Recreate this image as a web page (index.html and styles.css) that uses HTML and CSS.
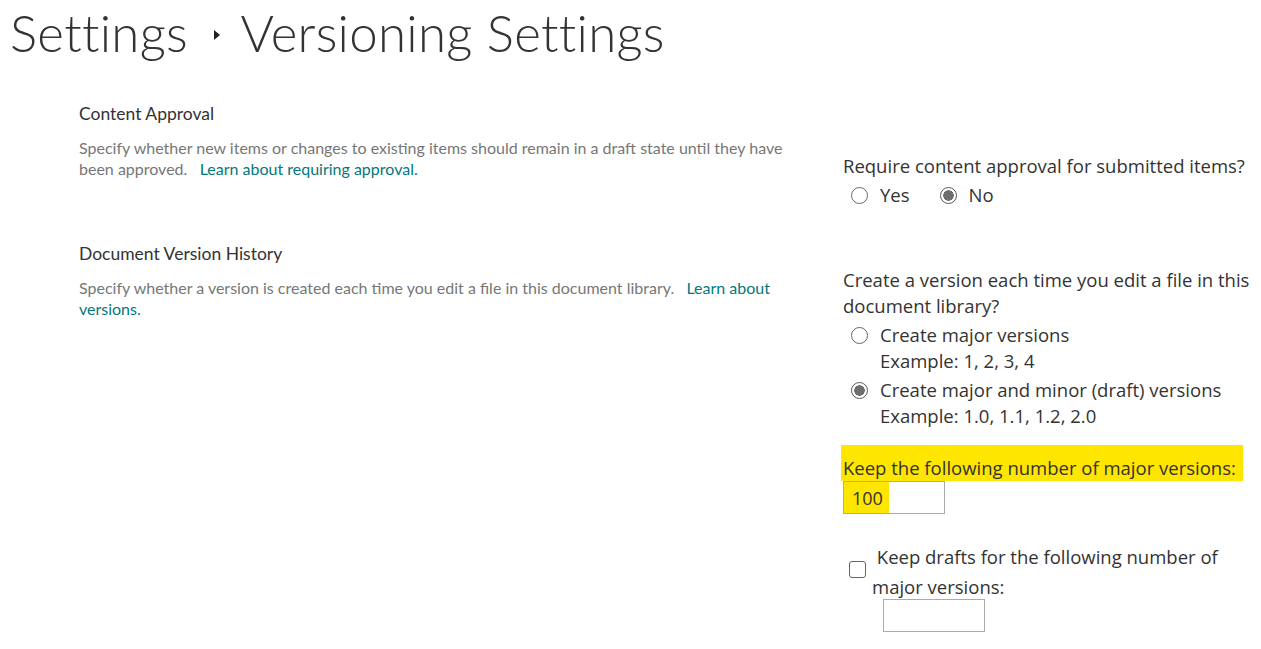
FILE: index.html
```html
<!DOCTYPE html>
<html lang="en">
<head>
    <meta charset="UTF-8">
    <title>Versioning Settings</title>
    <link rel="stylesheet" href="styles.css">
</head>
<body>

<div class="page">
    <h1 class="title">Settings <span class="crumb-arrow"></span> Versioning Settings</h1>

    <div class="section section-approval">
        <div class="info">
            <h2>Content Approval</h2>
            <p>Specify whether new items or changes to existing items should remain in a draft state until they have been approved. &nbsp; <a href="#">Learn about requiring approval.</a></p>
        </div>
        <div class="control">
            <div class="question">Require content approval for submitted items?</div>
            <div class="radio-row">
                <label class="opt"><input type="radio" name="approval"> Yes</label>
                <label class="opt"><input type="radio" name="approval" checked> No</label>
            </div>
        </div>
    </div>

    <div class="section section-history">
        <div class="info">
            <h2>Document Version History</h2>
            <p>Specify whether a version is created each time you edit a file in this document library. &nbsp; <a href="#">Learn about versions.</a></p>
        </div>
        <div class="control">
            <div class="question">Create a version each time you edit a file in this document library?</div>
            <label class="choice">
                <input type="radio" name="versions">
                <span>Create major versions<br>Example: 1, 2, 3, 4</span>
            </label>
            <label class="choice">
                <input type="radio" name="versions" checked>
                <span>Create major and minor (draft) versions<br>Example: 1.0, 1.1, 1.2, 2.0</span>
            </label>

            <div class="keep">
                <div class="highlight">Keep the following number of major versions:</div>
                <input type="text" class="num num-marked" value="100">
            </div>

            <div class="drafts">
                <input type="checkbox" class="box">
                <div class="drafts-text">&nbsp;Keep drafts for the following number of<br>major versions:</div>
            </div>
            <input type="text" class="num num-drafts">
        </div>
    </div>
</div>

</body>
</html>
```

FILE: styles.css
```css
body { margin: 0; background: #fff; color: #333; font-family: "Open Sans", "Noto Sans", sans-serif; }
.page { padding: 0 0 0 10px; }

.title { margin: 0; padding-top: 1px; font-family: Lato, "Open Sans", sans-serif; font-weight: 300; font-size: 51px; line-height: 64px; color: #333; letter-spacing: 0.3px; }
.crumb-arrow { display: inline-block; width: 0; height: 0; margin: 0 8px 0 12px; vertical-align: 12px; border-top: 5px solid transparent; border-bottom: 5px solid transparent; border-left: 6px solid #222; }

.section { display: flex; }
.info { width: 705px; margin-left: 69px; margin-right: 59px; }
.info h2 { margin: 0; font-family: Lato, sans-serif; font-size: 17.5px; font-weight: 400; line-height: 26px; color: #333; }
.info p { margin: 10px 0 0; font-family: Lato, sans-serif; font-size: 16px; line-height: 21px; color: #777; }
.info a { color: #03787c; text-decoration: none; }

.control { width: 412px; font-size: 18.5px; line-height: 26px; color: #333; }
.section-approval { margin-top: 36px; height: 140px; }
.section-approval .control { padding-top: 52px; }
.section-history .control { padding-top: 26px; }

.radio-row { display: flex; gap: 30px; margin-top: 3px; padding-left: 8px; }
.opt { display: flex; align-items: center; gap: 12px; }

input[type="radio"] { appearance: none; margin: 0; width: 17px; height: 17px; border: 1px solid #666; border-radius: 50%; background: #fff; flex: none; }
input[type="radio"]:checked { border-color: #555; background: radial-gradient(circle, #6e6e6e 0 5px, #fff 5.5px); }

.choice { display: flex; align-items: flex-start; gap: 12px; padding-left: 8px; margin-top: 3px; }
.choice input { margin-top: 5px; }

.keep { margin-top: 16px; }
.highlight { background: #ffe600; margin-left: -2px; padding: 10px 0 0 2px; width: 400px; line-height: 26px; white-space: nowrap; }
.num { display: block; box-sizing: border-box; width: 102px; height: 33px; border: 1px solid #ababab; padding: 0 8px; font-family: "Open Sans", sans-serif; font-size: 18px; color: #333; outline: none; }
.num-marked { background: linear-gradient(to right, #ffe600 45px, #fff 45px); }

.drafts { display: flex; align-items: flex-start; gap: 12px; margin-top: 28px; padding-left: 6px; }
.box { appearance: none; margin: 19px 0 0; width: 17px; height: 17px; border: 1.5px solid #666; border-radius: 3px; background: #fff; flex: none; }
.drafts-text { line-height: 30px; margin-left: -6px; }
.num-drafts { margin: -3px 0 0 40px; }
```
